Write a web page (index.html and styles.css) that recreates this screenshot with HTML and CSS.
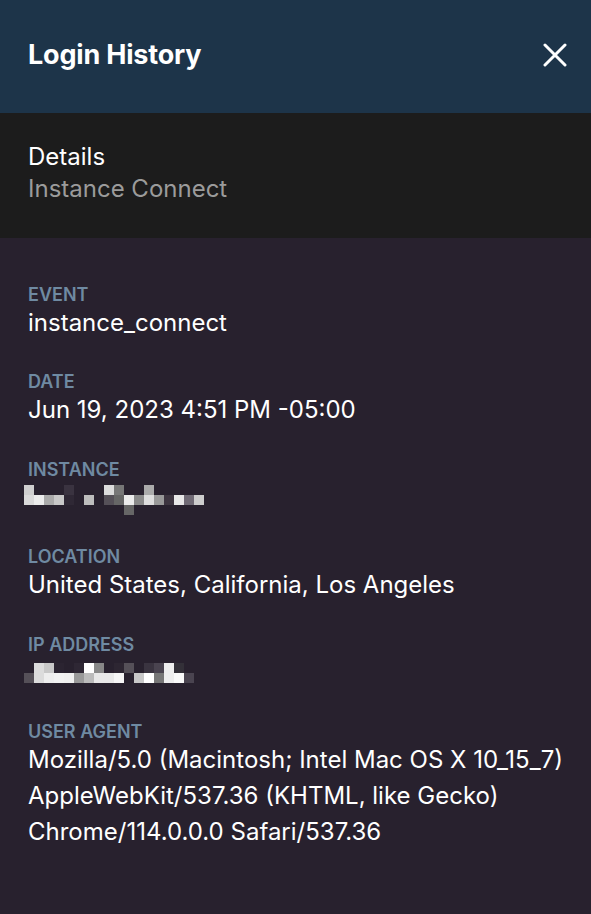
FILE: index.html
```html
<!DOCTYPE html>
<html lang="en">
<head>
<meta charset="utf-8">
<title>Login History</title>
<link rel="stylesheet" href="styles.css">
</head>
<body>
<div class="panel">
  <header class="header">
    <h1 class="title">Login History</h1>
    <button class="close" aria-label="Close">
      <svg width="24" height="24" viewBox="0 0 24 24"><path d="M2 2 L22 22 M22 2 L2 22" stroke="#fff" stroke-width="3" stroke-linecap="round" fill="none"/></svg>
    </button>
  </header>
  <section class="summary">
    <div class="summary-title">Details</div>
    <div class="summary-sub">Instance Connect</div>
  </section>
  <main class="body">
    <div class="field">
      <div class="label">EVENT</div>
      <div class="value">instance_connect</div>
    </div>
    <div class="field">
      <div class="label">DATE</div>
      <div class="value">Jun 19, 2023 4:51 PM -05:00</div>
    </div>
    <div class="field">
      <div class="label">INSTANCE</div>
      <div class="value value-blur blur-instance">
        <svg class="blur" width="180" height="30" viewBox="0 0 180 30" aria-label="hidden instance">
          <rect x="0" y="0" width="10" height="10" fill="#cfcfcf"/>
          <rect x="40" y="0" width="10" height="10" fill="#3a3340"/>
          <rect x="80" y="0" width="10" height="10" fill="#dcdcdc"/>
          <rect x="90" y="0" width="10" height="10" fill="#777"/>
          <rect x="120" y="0" width="10" height="10" fill="#ababab"/>
          <rect x="0" y="10" width="10" height="10" fill="#dadada"/>
          <rect x="10" y="10" width="10" height="10" fill="#ececec"/>
          <rect x="20" y="10" width="10" height="10" fill="#aaa"/>
          <rect x="30" y="10" width="10" height="10" fill="#c8c8c8"/>
          <rect x="40" y="10" width="10" height="10" fill="#2f2835"/>
          <rect x="60" y="10" width="10" height="10" fill="#bdbdbd"/>
          <rect x="80" y="10" width="10" height="10" fill="#555058"/>
          <rect x="90" y="10" width="10" height="10" fill="#666"/>
          <rect x="100" y="10" width="10" height="10" fill="#ececec"/>
          <rect x="110" y="10" width="10" height="10" fill="#8a8a8a"/>
          <rect x="120" y="10" width="10" height="10" fill="#dedede"/>
          <rect x="130" y="10" width="10" height="10" fill="#999"/>
          <rect x="140" y="10" width="10" height="10" fill="#3d3540"/>
          <rect x="150" y="10" width="10" height="10" fill="#e8e8e8"/>
          <rect x="160" y="10" width="10" height="10" fill="#706a75"/>
          <rect x="170" y="10" width="10" height="10" fill="#cdcdcd"/>
          <rect x="100" y="20" width="10" height="10" fill="#666"/>
        </svg>
      </div>
    </div>
    <div class="field">
      <div class="label">LOCATION</div>
      <div class="value">United States, California, Los Angeles</div>
    </div>
    <div class="field">
      <div class="label">IP ADDRESS</div>
      <div class="value value-blur blur-ip">
        <svg class="blur" width="170" height="20" viewBox="0 0 170 20" aria-label="hidden ip address">
          <rect x="10" y="0" width="10" height="10" fill="#dcdcdc"/>
          <rect x="20" y="0" width="10" height="10" fill="#c8c8c8"/>
          <rect x="30" y="0" width="10" height="10" fill="#2b2431"/>
          <rect x="50" y="0" width="10" height="10" fill="#2e2734"/>
          <rect x="60" y="0" width="10" height="10" fill="#fff"/>
          <rect x="70" y="0" width="10" height="10" fill="#888"/>
          <rect x="90" y="0" width="10" height="10" fill="#2d2632"/>
          <rect x="100" y="0" width="10" height="10" fill="#555058"/>
          <rect x="120" y="0" width="10" height="10" fill="#3a3440"/>
          <rect x="130" y="0" width="10" height="10" fill="#4a4450"/>
          <rect x="140" y="0" width="10" height="10" fill="#eee"/>
          <rect x="150" y="0" width="10" height="10" fill="#333038"/>
          <rect x="0" y="10" width="10" height="10" fill="#555058"/>
          <rect x="10" y="10" width="10" height="10" fill="#dcdcdc"/>
          <rect x="20" y="10" width="10" height="10" fill="#eee"/>
          <rect x="30" y="10" width="10" height="10" fill="#f2f2f2"/>
          <rect x="40" y="10" width="10" height="10" fill="#f0f0f0"/>
          <rect x="50" y="10" width="10" height="10" fill="#999"/>
          <rect x="60" y="10" width="10" height="10" fill="#bbb"/>
          <rect x="70" y="10" width="10" height="10" fill="#e8e8e8"/>
          <rect x="80" y="10" width="10" height="10" fill="#e8e8e8"/>
          <rect x="90" y="10" width="10" height="10" fill="#f5f5f5"/>
          <rect x="110" y="10" width="10" height="10" fill="#c8c8c8"/>
          <rect x="120" y="10" width="10" height="10" fill="#fff"/>
          <rect x="130" y="10" width="10" height="10" fill="#777"/>
          <rect x="140" y="10" width="10" height="10" fill="#eee"/>
          <rect x="150" y="10" width="10" height="10" fill="#fafafa"/>
          <rect x="160" y="10" width="10" height="10" fill="#4a4450"/>
        </svg>
      </div>
    </div>
    <div class="field">
      <div class="label">USER AGENT</div>
      <div class="value">Mozilla/5.0 (Macintosh; Intel Mac OS X 10_15_7)<br>AppleWebKit/537.36 (KHTML, like Gecko)<br>Chrome/114.0.0.0 Safari/537.36</div>
    </div>
  </main>
</div>
</body>
</html>
```

FILE: styles.css
```css
* { box-sizing: border-box; }
html, body {
  margin: 0;
  padding: 0;
  height: 100%;
}
body {
  background: #28212e;
  font-family: Inter, "Noto Sans", "Liberation Sans", sans-serif;
  color: #fff;
}
.panel {
  min-height: 914px;
  display: flex;
  flex-direction: column;
  background: #28212e;
}
.header {
  height: 113px;
  background: #1d3449;
  display: flex;
  align-items: center;
  justify-content: space-between;
  padding: 0 24px 3px 28px;
}
.title {
  margin: 0;
  font-size: 27px;
  line-height: 32px;
  font-weight: 700;
  letter-spacing: -0.2px;
  color: #fff;
}
.close {
  background: none;
  border: 0;
  padding: 0;
  width: 24px;
  height: 24px;
  display: flex;
  cursor: pointer;
}
.summary {
  background: #1c1c1c;
  height: 125px;
  padding: 28px 28px 0;
}
.summary-title {
  font-size: 24px;
  line-height: 32px;
  color: #fff;
}
.summary-sub {
  font-size: 24px;
  line-height: 32px;
  color: #9b9b9b;
}
.body {
  padding: 47px 28px 40px;
  display: flex;
  flex-direction: column;
  gap: 31.4px;
}
.label {
  font-size: 18px;
  line-height: 20px;
  font-weight: 600;
  color: #6f8aa2;
}
.value {
  font-size: 24px;
  line-height: 36px;
  color: #fff;
  min-height: 36px;
  white-space: nowrap;
}
.value-blur {
  height: 36px;
}
.blur-instance { padding-top: 5px; }
.blur-ip { padding-top: 8px; }
.blur {
  display: block;
  margin-left: -4px;
}
```
